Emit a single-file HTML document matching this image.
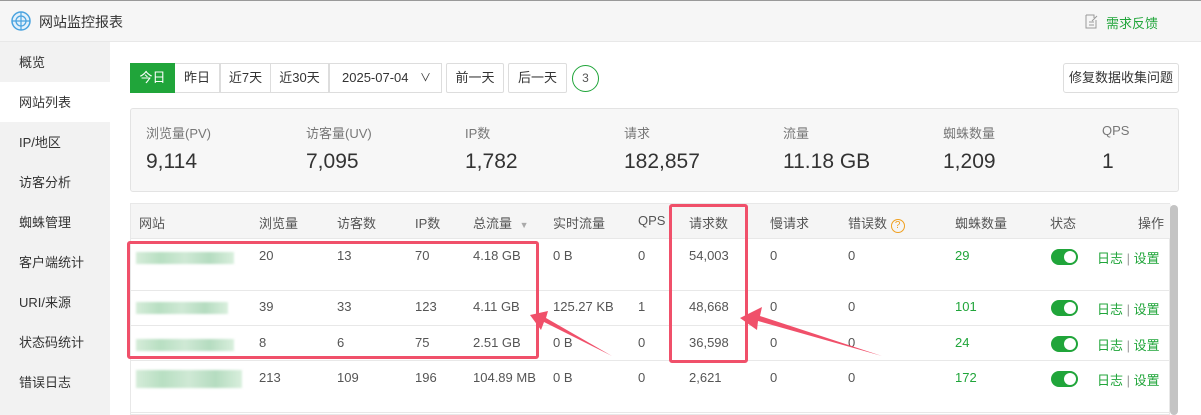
<!DOCTYPE html>
<html><head><meta charset="utf-8"><style>
*{margin:0;padding:0;box-sizing:border-box}
body{width:1201px;height:415px;overflow:hidden;font-family:"Liberation Sans","Noto Sans CJK SC",sans-serif;font-size:13px;color:#555;background:#fff;position:relative}
.hdr{position:absolute;left:0;top:0;width:1201px;height:42px;background:#f6f6f6;border-top:1px solid #999;border-bottom:1px solid #e8e8e8}
.side{position:absolute;left:0;top:42px;width:110px;height:373px;background:#f2f2f2}
.side div{height:40px;line-height:42px;padding-left:19px;color:#333;font-size:13px}
.side .on{background:#fff}
.a{position:absolute;white-space:nowrap}
.btn{position:absolute;top:63px;height:30px;line-height:28px;border:1px solid #ddd;text-align:center;color:#333;background:#fff}
.stat{position:absolute;left:130px;top:108px;width:1049px;height:84px;background:#f7f7f7;border:1px solid #e3e3e3;border-radius:3px}
.lbl{position:absolute;top:14px;color:#777;font-size:13px}
.val{position:absolute;top:41px;color:#333;font-size:21px}
.tbl{position:absolute;left:130px;top:203px;width:1040px;height:212px;border:1px solid #e8e8e8}
.th{position:absolute;left:0;top:0;width:1040px;height:35px;background:#f5f5f5;border-bottom:1px solid #e8e8e8}
.line{position:absolute;left:130px;width:1040px;height:1px;background:#e8e8e8}
.c{position:absolute;color:#555;font-size:13px;white-space:nowrap}
.g{color:#20a53a}
.tog{position:absolute;width:27px;height:16px;border-radius:8px;background:#20a53a}
.tog:after{content:"";position:absolute;right:2px;top:2px;width:12px;height:12px;border-radius:6px;background:#fff}
.blur{position:absolute;height:12px;background:linear-gradient(90deg,#d5ecd9,#b8dfc2,#cfe9d5,#b5dcc0,#d9efdd);filter:blur(1px)}
.red{position:absolute;border:3px solid #f0506a;border-radius:3px}
</style></head><body>
<div class="hdr">
 <svg class="a" style="left:11px;top:10px" width="20" height="20" viewBox="0 0 20 20"><circle cx="10" cy="10" r="9" fill="#e3f1fb" stroke="#4aa3df" stroke-width="1.5"/><circle cx="10" cy="10" r="5" fill="none" stroke="#4aa3df" stroke-width="1.3"/><path d="M10 1v18M1 10h18" stroke="#4aa3df" stroke-width="1.2"/></svg>
 <div class="a" style="left:39px;top:11px;font-size:14px;color:#333">网站监控报表</div>
 <svg class="a" style="left:1085px;top:13px" width="13" height="15" viewBox="0 0 13 15"><path d="M1 1h8v3M1 1v13h10V6" fill="none" stroke="#999"/><path d="M4 8h5M4 11h5" stroke="#999"/><path d="M7 7l5-5" stroke="#999"/></svg>
 <div class="a g" style="left:1106px;top:12px;font-size:13px">需求反馈</div>
</div>
<div class="side">
 <div>概览</div><div class="on">网站列表</div><div>IP/地区</div><div>访客分析</div><div>蜘蛛管理</div><div>客户端统计</div><div>URI/来源</div><div>状态码统计</div><div>错误日志</div>
</div>
<div class="btn" style="left:130px;width:45px;background:#20a53a;color:#fff;border-color:#20a53a">今日</div>
<div class="btn" style="left:175px;width:45px;border-left:none">昨日</div>
<div class="btn" style="left:220px;width:51px">近7天</div>
<div class="btn" style="left:271px;width:58px;border-left:none">近30天</div>
<div class="btn" style="left:329px;width:113px;text-align:left;padding-left:12px">2025-07-04 <span style="position:absolute;right:10px;top:0;font-size:11px">&#x2228;</span></div>
<div class="btn" style="left:446px;width:58px;border-radius:2px">前一天</div>
<div class="btn" style="left:508px;width:59px;border-radius:2px">后一天</div>
<div class="a" style="left:572px;top:65px;width:27px;height:27px;border:1.5px solid #20a53a;border-radius:50%;text-align:center;line-height:24px;font-size:12px;color:#555">3</div>
<div class="btn" style="left:1063px;width:116px;border-radius:3px">修复数据收集问题</div>
<div class="stat">
 <div class="lbl" style="left:15px">浏览量(PV)</div><div class="val" style="left:15px">9,114</div>
 <div class="lbl" style="left:175px">访客量(UV)</div><div class="val" style="left:175px">7,095</div>
 <div class="lbl" style="left:334px">IP数</div><div class="val" style="left:334px">1,782</div>
 <div class="lbl" style="left:493px">请求</div><div class="val" style="left:493px">182,857</div>
 <div class="lbl" style="left:652px">流量</div><div class="val" style="left:652px">11.18 GB</div>
 <div class="lbl" style="left:812px">蜘蛛数量</div><div class="val" style="left:812px">1,209</div>
 <div class="lbl" style="left:971px">QPS</div><div class="val" style="left:971px">1</div>
</div>
<div class="tbl"><div class="th"></div></div>
<div class="a" style="left:1170px;top:205px;width:8px;height:210px;background:#c4c4c4;border-radius:4px"></div>
<div class="c" style="left:139px;top:213px">网站</div><div class="c" style="left:259px;top:213px">浏览量</div><div class="c" style="left:337px;top:213px">访客数</div><div class="c" style="left:415px;top:213px">IP数</div><div class="c" style="left:473px;top:213px">总流量 <span style="color:#aaa;font-size:9px;margin-left:4px">&#9660;</span></div><div class="c" style="left:553px;top:213px">实时流量</div><div class="c" style="left:638px;top:213px">QPS</div><div class="c" style="left:689px;top:213px">请求数</div><div class="c" style="left:770px;top:213px">慢请求</div><div class="c" style="left:848px;top:213px">错误数 <span style="display:inline-block;width:14px;height:14px;border:1px solid #f0a020;border-radius:50%;color:#f0a020;font-size:10px;text-align:center;line-height:12px">?</span></div><div class="c" style="left:955px;top:213px">蜘蛛数量</div><div class="c" style="left:1050px;top:213px">状态</div><div class="c" style="left:1138px;top:213px">操作</div>
<div class="line" style="top:290px"></div><div class="line" style="top:325px"></div><div class="line" style="top:360px"></div><div class="line" style="top:412px"></div>
<div class="blur" style="left:136px;top:252px;width:98px"></div>
<div class="blur" style="left:136px;top:302px;width:92px"></div>
<div class="blur" style="left:136px;top:339px;width:98px"></div>
<div class="blur" style="left:136px;top:370px;width:106px;height:18px"></div>
<div class="c" style="left:259px;top:248px">20</div><div class="c" style="left:337px;top:248px">13</div><div class="c" style="left:415px;top:248px">70</div><div class="c" style="left:473px;top:248px">4.18 GB</div><div class="c" style="left:553px;top:248px">0 B</div><div class="c" style="left:638px;top:248px">0</div><div class="c" style="left:689px;top:248px">54,003</div><div class="c" style="left:770px;top:248px">0</div><div class="c" style="left:848px;top:248px">0</div><div class="c g" style="left:955px;top:248px">29</div>
<div class="c" style="left:259px;top:299px">39</div><div class="c" style="left:337px;top:299px">33</div><div class="c" style="left:415px;top:299px">123</div><div class="c" style="left:473px;top:299px">4.11 GB</div><div class="c" style="left:553px;top:299px">125.27 KB</div><div class="c" style="left:638px;top:299px">1</div><div class="c" style="left:689px;top:299px">48,668</div><div class="c" style="left:770px;top:299px">0</div><div class="c" style="left:848px;top:299px">0</div><div class="c g" style="left:955px;top:299px">101</div>
<div class="c" style="left:259px;top:335px">8</div><div class="c" style="left:337px;top:335px">6</div><div class="c" style="left:415px;top:335px">75</div><div class="c" style="left:473px;top:335px">2.51 GB</div><div class="c" style="left:553px;top:335px">0 B</div><div class="c" style="left:638px;top:335px">0</div><div class="c" style="left:689px;top:335px">36,598</div><div class="c" style="left:770px;top:335px">0</div><div class="c" style="left:848px;top:335px">0</div><div class="c g" style="left:955px;top:335px">24</div>
<div class="c" style="left:259px;top:370px">213</div><div class="c" style="left:337px;top:370px">109</div><div class="c" style="left:415px;top:370px">196</div><div class="c" style="left:473px;top:370px">104.89 MB</div><div class="c" style="left:553px;top:370px">0 B</div><div class="c" style="left:638px;top:370px">0</div><div class="c" style="left:689px;top:370px">2,621</div><div class="c" style="left:770px;top:370px">0</div><div class="c" style="left:848px;top:370px">0</div><div class="c g" style="left:955px;top:370px">172</div>
<div class="tog" style="left:1051px;top:249px"></div><div class="tog" style="left:1051px;top:300px"></div><div class="tog" style="left:1051px;top:336px"></div><div class="tog" style="left:1051px;top:371px"></div>
<div class="c" style="left:1097px;top:248px"><span class="g">日志</span> <span style="color:#999">|</span> <span class="g">设置</span></div>
<div class="c" style="left:1097px;top:299px"><span class="g">日志</span> <span style="color:#999">|</span> <span class="g">设置</span></div>
<div class="c" style="left:1097px;top:335px"><span class="g">日志</span> <span style="color:#999">|</span> <span class="g">设置</span></div>
<div class="c" style="left:1097px;top:370px"><span class="g">日志</span> <span style="color:#999">|</span> <span class="g">设置</span></div>
<div class="red" style="left:127px;top:241px;width:412px;height:118px"></div>
<div class="red" style="left:669px;top:204px;width:79px;height:159px"></div>
<svg class="a" style="left:0;top:0" width="1201" height="415"><path d="M530 315 L548 311 L546 318 L612 356 L544 322 L541 330 Z" fill="#f0506a"/><path d="M740 318 L762 307 L760 316 L882 356 L758 321 L757 330 Z" fill="#f0506a"/></svg>
</body></html>
